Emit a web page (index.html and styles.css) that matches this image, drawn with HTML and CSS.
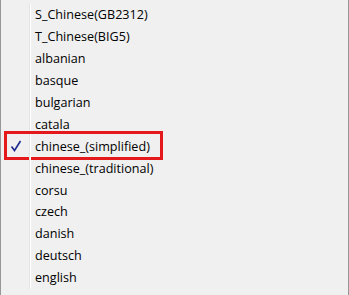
FILE: index.html
```html
<!DOCTYPE html>
<html>
<head>
<meta charset="utf-8">
<link rel="stylesheet" href="styles.css">
</head>
<body>
<div class="menu">
  <div class="item"><span class="gutter"></span><span class="label">S_Chinese(GB2312)</span></div>
  <div class="item"><span class="gutter"></span><span class="label">T_Chinese(BIG5)</span></div>
  <div class="item"><span class="gutter"></span><span class="label">albanian</span></div>
  <div class="item"><span class="gutter"></span><span class="label">basque</span></div>
  <div class="item"><span class="gutter"></span><span class="label">bulgarian</span></div>
  <div class="item"><span class="gutter"></span><span class="label">catala</span></div>
  <div class="item checked"><span class="gutter"><svg class="check" width="12" height="12" viewBox="0 0 12 12"><path d="M1.5 6.5 L4.5 10.5 L10.5 1" fill="none" stroke="#1b2a8e" stroke-width="1.6"/></svg></span><span class="label">chinese_(simplified)</span></div>
  <div class="item"><span class="gutter"></span><span class="label">chinese_(traditional)</span></div>
  <div class="item"><span class="gutter"></span><span class="label">corsu</span></div>
  <div class="item"><span class="gutter"></span><span class="label">czech</span></div>
  <div class="item"><span class="gutter"></span><span class="label">danish</span></div>
  <div class="item"><span class="gutter"></span><span class="label">deutsch</span></div>
  <div class="item"><span class="gutter"></span><span class="label">english</span></div>
</div>
</body>
</html>
```
FILE: styles.css
```css
html, body {
  margin: 0;
  padding: 0;
  background: #f0f0f0;
}
.menu {
  box-sizing: border-box;
  width: 349px;
  height: 295px;
  overflow: hidden;
  background: #f0f0f0;
  border-left: 1px solid #979797;
  border-right: 1px solid #979797;
  padding-top: 4px;
  font-family: "Open Sans", "Liberation Sans", sans-serif;
  font-size: 12.6px;
  color: #000;
}
.item {
  position: relative;
  display: flex;
  align-items: center;
  height: 21.9px;
}
.gutter {
  box-sizing: border-box;
  width: 29px;
  height: 100%;
  flex: none;
  border-right: 1px solid #e2e3e3;
  box-shadow: 1px 0 0 #ffffff;
  display: flex;
  align-items: center;
  justify-content: center;
}
.check {
  margin-left: 1px;
  margin-top: -1px;
}
.label {
  padding-left: 5px;
  white-space: nowrap;
}
.checked::after {
  content: "";
  position: absolute;
  left: 3px;
  top: -4px;
  width: 153px;
  height: 23px;
  border: 3px solid #e3191b;
}
```
